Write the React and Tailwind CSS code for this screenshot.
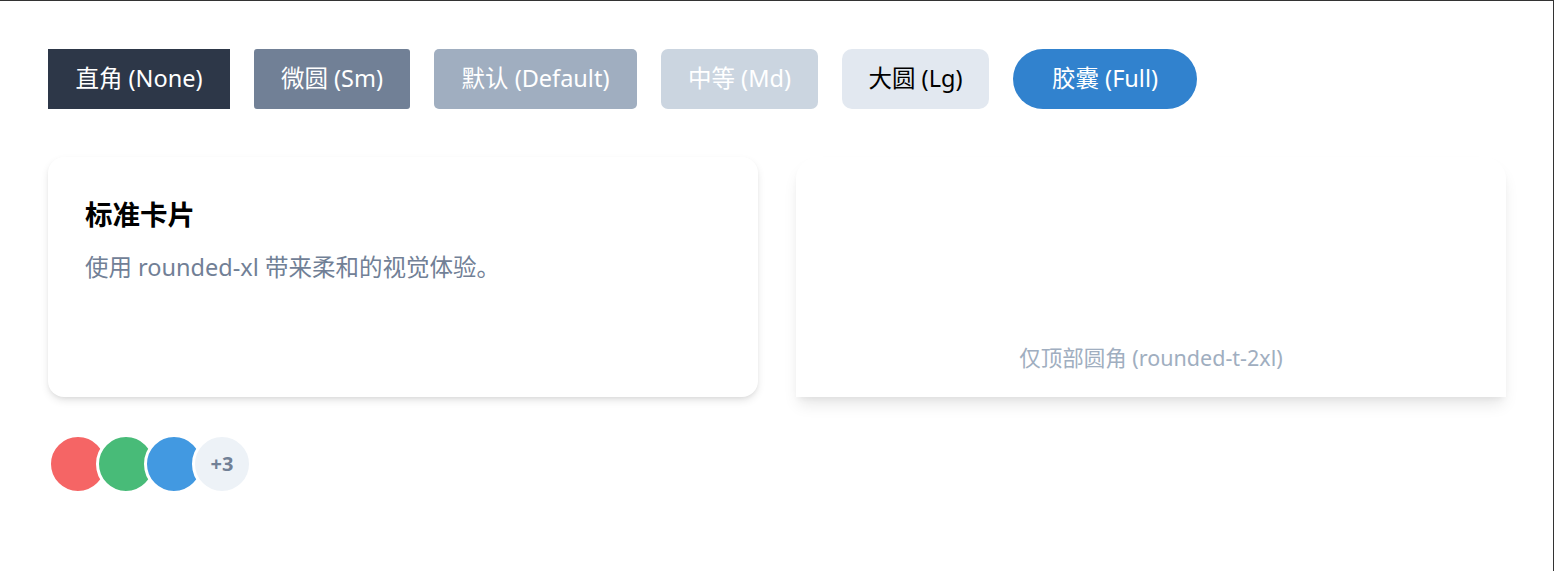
import React from "react";

const font = { fontFamily: '"Noto Sans", "Noto Sans CJK SC", sans-serif' };

export default function App() {
  return (
    <div
      className="w-[1554px] h-[571px] bg-white border-t border-r border-[#333333] box-border overflow-hidden"
      style={font}
    >
      <div className="flex flex-col pt-[48px] pl-[48px] pr-[47px]">
        <div className="flex gap-6">
          <div className="h-[60px] w-[182px] flex items-center justify-center bg-[#2d3748] text-white text-[23.5px] whitespace-nowrap">
            直角 (None)
          </div>
          <div className="h-[60px] w-[156px] flex items-center justify-center bg-[#718096] text-white text-[23.5px] rounded-[3px] whitespace-nowrap">
            微圆 (Sm)
          </div>
          <div className="h-[60px] w-[203px] flex items-center justify-center bg-[#a0aec0] text-white text-[23.5px] rounded-[5px] whitespace-nowrap">
            默认 (Default)
          </div>
          <div className="h-[60px] w-[157px] flex items-center justify-center bg-[#cbd5e0] text-white text-[23.5px] rounded-[7px] whitespace-nowrap">
            中等 (Md)
          </div>
          <div className="h-[60px] w-[147px] flex items-center justify-center bg-[#e2e8f0] text-black text-[23.5px] rounded-[10px] whitespace-nowrap">
            大圆 (Lg)
          </div>
          <div className="h-[60px] w-[184px] flex items-center justify-center bg-[#3182ce] text-white text-[23.5px] rounded-full whitespace-nowrap">
            胶囊 (Full)
          </div>
        </div>

        <div className="grid grid-cols-2 gap-[38px] mt-[48px] w-[1458px]">
          <div className="h-[240px] bg-white rounded-[16px] shadow-[0_4px_8px_-1px_rgba(0,0,0,0.12),0_2px_4px_-1px_rgba(0,0,0,0.06)] px-[37px] pt-[36px]">
            <div className="text-[27.5px] leading-[44px] font-bold text-black">标准卡片</div>
            <div className="mt-[15px] text-[23.5px] leading-[30px] text-[#718096]">
              使用 rounded-xl 带来柔和的视觉体验。
            </div>
          </div>
          <div className="h-[240px] bg-white rounded-t-[22px] shadow-[0_10px_16px_-3px_rgba(0,0,0,0.1),0_4px_6px_-2px_rgba(0,0,0,0.05)] flex items-end justify-center pb-[25px]">
            <div className="text-[21.5px] leading-[28px] text-[#a0aec0]">仅顶部圆角 (rounded-t-2xl)</div>
          </div>
        </div>

        <div className="flex mt-[37px]">
          <div className="w-[60px] h-[60px] rounded-full border-[3px] border-white bg-[#f56565]" />
          <div className="w-[60px] h-[60px] rounded-full border-[3px] border-white bg-[#48bb78] -ml-3" />
          <div className="w-[60px] h-[60px] rounded-full border-[3px] border-white bg-[#4299e1] -ml-3" />
          <div className="w-[60px] h-[60px] rounded-full border-[3px] border-white bg-[#edf2f7] -ml-3 flex items-center justify-center text-[20px] font-bold text-[#718096]">
            +3
          </div>
        </div>
      </div>
    </div>
  );
}
